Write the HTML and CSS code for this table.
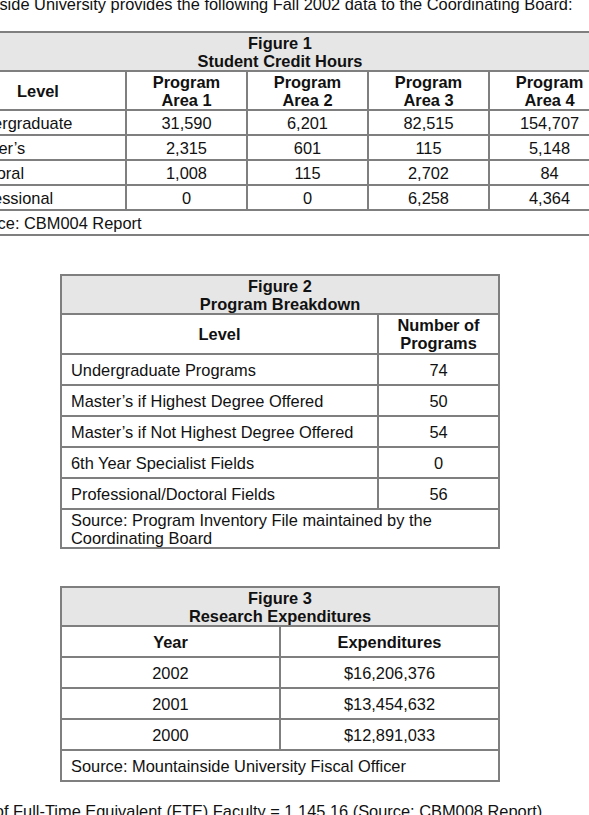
FILE: index.html
```html
<!DOCTYPE html>
<html lang="en">
<head>
    <meta charset="UTF-8">
    <meta name="viewport" content="width=device-width, initial-scale=1.0">
    <title>Mountainside University - Fall 2002 Data</title>
    <link rel="stylesheet" href="styles.css">
</head>
<body>
    <div class="page">
        <p class="intro">Mountainside University provides the following Fall 2002 data to the Coordinating Board:</p>

        <!-- Figure 1 -->
        <table class="fig fig-one">
            <colgroup>
                <col class="col-level">
                <col class="col-area">
                <col class="col-area">
                <col class="col-area">
                <col class="col-area">
            </colgroup>
            <tr class="caption-row">
                <th colspan="5">Figure 1<br>Student Credit Hours</th>
            </tr>
            <tr class="head-row">
                <th>Level</th>
                <th>Program<br>Area 1</th>
                <th>Program<br>Area 2</th>
                <th>Program<br>Area 3</th>
                <th>Program<br>Area 4</th>
            </tr>
            <tr>
                <td class="left">Undergraduate</td>
                <td>31,590</td>
                <td>6,201</td>
                <td>82,515</td>
                <td>154,707</td>
            </tr>
            <tr>
                <td class="left">Master’s</td>
                <td>2,315</td>
                <td>601</td>
                <td>115</td>
                <td>5,148</td>
            </tr>
            <tr>
                <td class="left">Doctoral</td>
                <td>1,008</td>
                <td>115</td>
                <td>2,702</td>
                <td>84</td>
            </tr>
            <tr>
                <td class="left">Professional</td>
                <td>0</td>
                <td>0</td>
                <td>6,258</td>
                <td>4,364</td>
            </tr>
            <tr class="source-row">
                <td class="left" colspan="5">Source: CBM004 Report</td>
            </tr>
        </table>

        <!-- Figure 2 -->
        <table class="fig fig-two">
            <colgroup>
                <col class="col-wide">
                <col class="col-num">
            </colgroup>
            <tr class="caption-row">
                <th colspan="2">Figure 2<br>Program Breakdown</th>
            </tr>
            <tr class="head-row">
                <th>Level</th>
                <th>Number of<br>Programs</th>
            </tr>
            <tr>
                <td class="left">Undergraduate Programs</td>
                <td>74</td>
            </tr>
            <tr>
                <td class="left">Master’s if Highest Degree Offered</td>
                <td>50</td>
            </tr>
            <tr>
                <td class="left">Master’s if Not Highest Degree Offered</td>
                <td>54</td>
            </tr>
            <tr>
                <td class="left">6th Year Specialist Fields</td>
                <td>0</td>
            </tr>
            <tr>
                <td class="left">Professional/Doctoral Fields</td>
                <td>56</td>
            </tr>
            <tr class="source-row">
                <td class="left" colspan="2">Source: Program Inventory File maintained by the Coordinating Board</td>
            </tr>
        </table>

        <!-- Figure 3 -->
        <table class="fig fig-three">
            <colgroup>
                <col class="col-half">
                <col class="col-half">
            </colgroup>
            <tr class="caption-row">
                <th colspan="2">Figure 3<br>Research Expenditures</th>
            </tr>
            <tr class="head-row">
                <th>Year</th>
                <th>Expenditures</th>
            </tr>
            <tr>
                <td>2002</td>
                <td>$16,206,376</td>
            </tr>
            <tr>
                <td>2001</td>
                <td>$13,454,632</td>
            </tr>
            <tr>
                <td>2000</td>
                <td>$12,891,033</td>
            </tr>
            <tr class="source-row">
                <td class="left" colspan="2">Source: Mountainside University Fiscal Officer</td>
            </tr>
        </table>

        <p class="outro">Number of Full-Time Equivalent (FTE) Faculty = 1,145.16 (Source: CBM008 Report)</p>
    </div>
</body>
</html>
```

FILE: styles.css
```css
* {
    margin: 0;
    padding: 0;
    box-sizing: border-box;
}

html, body {
    overflow: hidden;
}

body {
    font-family: 'Liberation Sans', Arial, sans-serif;
    font-size: 16.4px;
    line-height: 18px;
    color: #111;
    background: white;
}

/* Document page, scrolled a bit to the left */
.page {
    width: 696px;
    margin: -5px 0 0 -68px;
}

.intro {
    white-space: nowrap;
}

.outro {
    margin-top: 20px;
    white-space: nowrap;
}

/* Tables */
.fig {
    border-collapse: collapse;
    table-layout: fixed;
    margin: 0 auto;
}

.fig th,
.fig td {
    border: 2px solid #7f7f7f;
    text-align: center;
    font-weight: normal;
}

.fig th {
    font-weight: bold;
}

.fig .left {
    text-align: left;
}

.caption-row th {
    background: #e6e6e6;
    padding: 1px 0 0;
}

/* Figure 1 */
.fig-one {
    margin-top: 18px;
    width: 660px;
}

.fig-one .col-level {
    width: 176px;
}

.fig-one .col-area {
    width: 121px;
}

.fig-one .head-row th {
    padding: 1px 0 0;
}

.fig-one td {
    padding: 3px 4px 2px;
}

.fig-one td.left {
    padding-left: 12px;
}

/* Figure 2 */
.fig-two {
    margin-top: 38px;
    width: 438px;
}

.fig-two .col-wide {
    width: 317px;
}

.fig-two .col-num {
    width: 121px;
}

.fig-two .head-row th {
    padding: 1px 0;
}

.fig-two td {
    padding: 6px 9px 5px;
}

.fig-two .source-row td {
    padding: 1px 9px 0;
}

/* Figure 3 */
.fig-three {
    margin-top: 37px;
    width: 438px;
}

.fig-three .col-half {
    width: 219px;
}

.fig-three .head-row th,
.fig-three td {
    padding: 6px 9px 5px;
}
```
